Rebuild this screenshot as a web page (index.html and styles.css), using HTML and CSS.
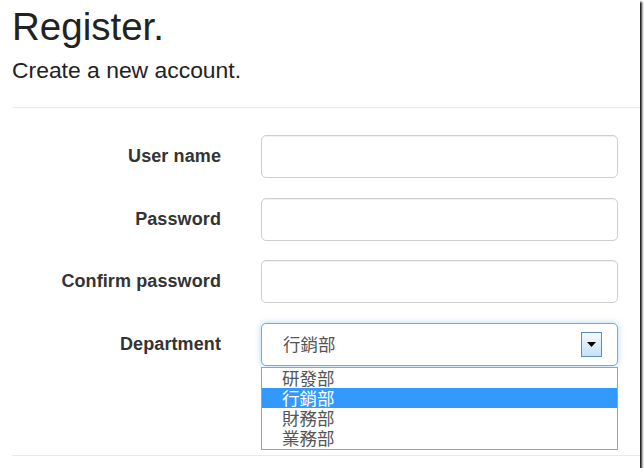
FILE: index.html
```html
<!DOCTYPE html>
<html lang="zh-Hant">
<head>
<meta charset="utf-8">
<title>Register</title>
<link rel="stylesheet" href="styles.css">
</head>
<body>
<div class="screen">
  <div class="page">
    <h2 class="title">Register.</h2>
    <h4 class="subtitle">Create a new account.</h4>
    <hr class="rule rule-top">
    <form class="form">
      <label class="label" for="u">User name</label>
      <input class="field" id="u" type="text">
      <label class="label" for="p">Password</label>
      <input class="field" id="p" type="password">
      <label class="label" for="c">Confirm password</label>
      <input class="field" id="c" type="password">
      <label class="label">Department</label>
      <div class="select-wrap">
        <div class="select">
          <span class="select-value">行銷部</span>
          <span class="arrow-btn">
            <svg width="9" height="5" viewBox="0 0 9 5"><path d="M0 0H9L4.5 5Z" fill="#000"/></svg>
          </span>
        </div>
        <ul class="listbox">
          <li class="option">研發部</li>
          <li class="option selected">行銷部</li>
          <li class="option">財務部</li>
          <li class="option">業務部</li>
        </ul>
      </div>
    </form>
    <hr class="rule rule-bottom">
  </div>
</div>
</body>
</html>
```

FILE: styles.css
```css
html, body {
  margin: 0;
  padding: 0;
  background: #fff;
}

.screen {
  width: 640px;
  height: 468px;
  background: #fff;
  box-shadow: 2px 2px 2px 0 rgba(0, 0, 0, 0.9);
}

.page {
  padding: 5px 0 0 12px;
  font-family: "Liberation Sans", Arial, sans-serif;
  color: #333;
}

.title {
  margin: 0;
  font-size: 38.5px;
  font-weight: normal;
  line-height: 43px;
  color: #222;
}

.subtitle {
  margin: 9px 0 0;
  font-size: 22.9px;
  font-weight: normal;
  line-height: 26px;
  color: #222;
}

.rule {
  border: 0;
  height: 1px;
  background: #eaeaea;
  margin: 0;
}

.rule-top {
  margin-top: 24px;
}

.rule-bottom {
  margin-top: 89px;
}

.form {
  display: grid;
  grid-template-columns: 209px 357px;
  column-gap: 40px;
  row-gap: 19.5px;
  margin-top: 27px;
  align-items: center;
}

.label {
  text-align: right;
  font-size: 18px;
  font-weight: bold;
  color: #333;
  letter-spacing: 0.1px;
}

.field {
  box-sizing: border-box;
  height: 43px;
  width: 357px;
  margin: 0;
  border: 1px solid #cfcfcf;
  border-radius: 5px;
  box-shadow: inset 0 1px 1px rgba(0, 0, 0, 0.06);
  background: #fff;
  font-size: 18px;
  padding: 0 14px;
}

.select-wrap {
  position: relative;
  height: 43px;
}

.select {
  box-sizing: border-box;
  height: 43px;
  width: 357px;
  border: 1px solid #66afe9;
  border-radius: 5px;
  box-shadow: 0 0 6px rgba(102, 175, 233, 0.5);
  display: flex;
  align-items: center;
  justify-content: space-between;
  padding: 0 15px 0 21px;
  background: #fff;
}

.select-value {
  font-family: "Noto Sans CJK TC", sans-serif;
  font-size: 17.5px;
  color: #555;
  line-height: 20px;
}

.arrow-btn {
  box-sizing: border-box;
  width: 21px;
  height: 25px;
  border: 1px solid #5d8fbd;
  background: linear-gradient(#f4faff, #c3e2f7);
  display: flex;
  align-items: center;
  justify-content: center;
}

.arrow-btn svg {
  display: block;
}

.listbox {
  position: absolute;
  left: 0;
  top: 44px;
  box-sizing: border-box;
  width: 357px;
  margin: 0;
  padding: 0 0 1px;
  list-style: none;
  background: #fff;
  border: 1px solid #8ea5c0;
}

.option {
  height: 20px;
  line-height: 20px;
  padding-left: 20px;
  font-family: "Noto Sans CJK TC", sans-serif;
  font-size: 17.5px;
  color: #555;
}

.option.selected {
  background: #3399ff;
  color: #fff;
}
```
